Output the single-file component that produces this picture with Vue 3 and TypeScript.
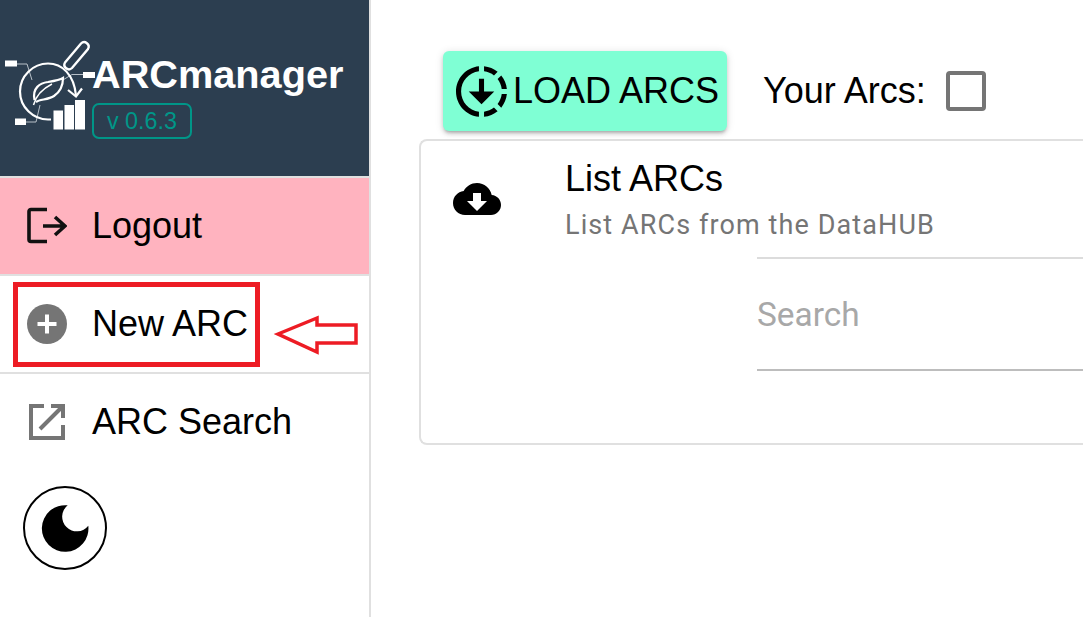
<script setup lang="ts">
const version = 'v 0.6.3'
</script>

<template>
  <div class="layout">
    <aside class="drawer">
      <header class="brand">
        <svg class="logo" viewBox="0 36 96 96" fill="none" stroke="#fff">
          <rect x="5" y="60.500" width="12" height="6" fill="#fff" stroke="none" />
          <path d="M17 64h10l5 16" stroke="#b8c0c8" stroke-width="1" />
          <rect x="15" y="118.500" width="11" height="6.500" fill="#fff" stroke="none" />
          <path d="M26 122h10l4-17" stroke="#b8c0c8" stroke-width="1" />
          <rect x="83" y="72" width="12" height="6" fill="#fff" stroke="none" />
          <path d="M83 74.500H72l-10 6" stroke="#b8c0c8" stroke-width="1" />
          <path d="M51 119.500H48c-15 0-28-12.500-28-28S33 63.500 48 63.500c14 0 26 11 28 32" stroke-width="2.200" />
          <path d="M68 90l8 6.500 6-8" stroke-width="2.200" />
          <path d="M34.500 100C32 88 40 83 48 82c6-1 12-2 15-4 0 8-3 14-9 18-6 4-14 3-18 6" stroke-width="2.200" />
          <path d="M33.500 105C36 95 44 88 52 84" stroke-width="1.500" />
          <path d="M65 62.500l16-19a4.500 4.500 0 0 1 7 5.500l-16 19a4.500 4.500 0 0 1-7-5.500z" stroke-width="2.400" />
          <rect x="53.500" y="110.500" width="9.500" height="19" fill="#fff" stroke="none" />
          <rect x="64.500" y="105" width="9.500" height="24.500" fill="#fff" stroke="none" />
          <rect x="75" y="100" width="10" height="29.500" fill="#fff" stroke="none" />
        </svg>
        <div class="brand-text">
          <div class="brand-title">ARCmanager</div>
          <span class="version">{{ version }}</span>
        </div>
      </header>

      <div class="nav-item logout">
        <svg class="nav-icon" viewBox="0 0 40 40" fill="none" stroke="#111" stroke-width="3.600">
          <path d="M20 3.500H4a2 2 0 0 0-2 2v28a2 2 0 0 0 2 2h16" />
          <path d="M16 20h22M28 11l10 9-10 9" />
        </svg>
        <span>Logout</span>
      </div>

      <div class="nav-item new-arc">
        <svg class="nav-icon" viewBox="0 0 40 40">
          <circle cx="20" cy="20" r="20" fill="#757575" />
          <path d="M20 10.500v19M10.500 20h19" stroke="#fff" stroke-width="4" />
        </svg>
        <span>New ARC</span>
        <div class="highlight"></div>
        <svg class="hint-arrow" viewBox="0 0 84 40" fill="#fff" stroke="#ed1c24" stroke-width="3.500">
          <path d="M3 19L42 3v7h39v18H42v9z" />
        </svg>
      </div>

      <div class="nav-item last">
        <svg class="nav-icon" viewBox="0 0 40 40" fill="none" stroke="#757575" stroke-width="4">
          <path d="M17 4H4v32h32V23" />
          <path d="M13 27L35 5M24 4h12v12" />
        </svg>
        <span>ARC Search</span>
      </div>

      <button class="theme-toggle" type="button" aria-label="Toggle theme">
        <svg viewBox="0 0 48 48" width="48" height="48">
          <path d="M26.700 1.300A23.300 23.300 0 1 0 47.300 21.700 14.600 14.600 0 1 1 26.700 1.300z" fill="#000" />
        </svg>
      </button>
    </aside>

    <main class="content">
      <div class="toolbar">
        <button class="load-btn" type="button">
          <svg class="load-icon" viewBox="2 2 20 20" fill="#000">
            <path d="M18.320 4.260C16.840 3.050 15.010 2.250 13 2.050v2.020c1.460.18 2.790.76 3.900 1.620L18.320 4.260zM19.930 11h2.020c-.2-2.010-1-3.840-2.210-5.320L18.310 7.100C19.170 8.210 19.750 9.540 19.930 11zM18.310 16.900l1.430 1.430c1.210-1.480 2.010-3.320 2.210-5.320h-2.020C19.750 14.460 19.170 15.790 18.310 16.900zM13 19.930v2.020c2.010-.2 3.840-1 5.320-2.210l-1.430-1.430C15.790 19.170 14.460 19.750 13 19.930zM11 19.930v2.020c-5.050-.5-9-4.760-9-9.950s3.950-9.450 9-9.950v2.020C7.050 4.560 4 7.920 4 12S7.050 19.440 11 19.930z" />
            <path d="M11 7h2v5h4l-5 5-5-5h4z" />
          </svg>
          LOAD ARCS
        </button>
        <span class="your-arcs">Your Arcs:</span>
        <span class="checkbox"></span>
      </div>

      <section class="card">
        <div class="card-head">
          <svg class="cloud" viewBox="0 4 24 16">
            <path d="M19.350 10.040C18.670 6.590 15.640 4 12 4 9.110 4 6.600 5.640 5.350 8.040 2.340 8.360 0 10.910 0 14c0 3.310 2.690 6 6 6h13c2.760 0 5-2.240 5-5 0-2.640-2.050-4.780-4.650-4.960zM17 13l-5 5-5-5h3V9h4v4h3z" fill="#000" />
          </svg>
          <div class="card-titles">
            <div class="card-title">List ARCs</div>
            <div class="card-sub">List ARCs from the DataHUB</div>
          </div>
        </div>
        <div class="search-row">
          <div class="search-field">Search</div>
        </div>
      </section>
    </main>
  </div>
</template>

<style>
html,
body {
  margin: 0;
  background: #fff;
  overflow: hidden;
}
</style>

<style scoped>
.layout {
  display: flex;
  width: 1083px;
  height: 617px;
  font-family: "Liberation Sans", Arial, sans-serif;
  color: #000;
}

.drawer {
  width: 369px;
  flex: none;
  border-right: 2px solid #e0e0e0;
  display: flex;
  flex-direction: column;
}

.brand {
  height: 140px;
  background: #2c3e50;
  border-bottom: 2px solid #e0e0e0;
  display: flex;
  align-items: flex-start;
  padding-top: 36px;
}

.logo {
  width: 96px;
  height: 96px;
  flex: none;
}

.brand-text {
  margin-left: -4px;
  padding-top: 16px;
}

.brand-title {
  color: #fff;
  font-size: 39.700px;
  font-weight: 700;
  line-height: 44px;
}

.version {
  display: inline-block;
  border: 2px solid #009688;
  border-radius: 7px;
  color: #009688;
  font-size: 23.300px;
  line-height: 32px;
  padding: 0 13px;
  margin-top: 7px;
}

.nav-item {
  height: 96px;
  border-bottom: 2px solid #e0e0e0;
  display: flex;
  align-items: center;
  padding-left: 27px;
  gap: 25px;
  font-size: 36px;
  position: relative;
}

.nav-item.last {
  border-bottom: 0;
}

.logout {
  background: #ffb3bf;
}

.new-arc {
  background: #fff;
}

.nav-icon {
  width: 40px;
  height: 40px;
  flex: none;
}

.highlight {
  position: absolute;
  left: 13px;
  top: 6px;
  width: 247px;
  height: 85px;
  box-sizing: border-box;
  border: 5px solid #ed1c24;
}

.hint-arrow {
  position: absolute;
  left: 275px;
  top: 39px;
  width: 84px;
  height: 40px;
  overflow: visible;
}

.theme-toggle {
  width: 84px;
  height: 84px;
  margin: 16px 0 0 23px;
  padding: 0;
  border: 2px solid #000;
  border-radius: 50%;
  background: #fff;
  display: flex;
  align-items: center;
  justify-content: center;
}

.content {
  flex: 1;
  min-width: 0;
  padding: 51px 0 0 48px;
}

.toolbar {
  display: flex;
  align-items: center;
  padding-left: 24px;
  height: 80px;
}

.load-btn {
  width: 284px;
  height: 80px;
  flex: none;
  display: flex;
  align-items: center;
  gap: 6px;
  padding: 0 0 0 13px;
  border: 0;
  border-radius: 6px;
  background: #7fffd4;
  font-family: inherit;
  font-size: 36px;
  color: #000;
  box-shadow: 0 3px 3px -2px rgba(0, 0, 0, 0.2), 0 3px 4px rgba(0, 0, 0, 0.14), 0 1px 8px rgba(0, 0, 0, 0.12);
}

.load-icon {
  width: 51px;
  height: 51px;
  flex: none;
}

.your-arcs {
  font-size: 36px;
  margin-left: 36px;
}

.checkbox {
  width: 32px;
  height: 32px;
  border: 4px solid #757575;
  border-radius: 4px;
  margin-left: 20px;
  flex: none;
}

.card {
  margin-top: 8px;
  height: 306px;
  box-sizing: border-box;
  border: 2px solid #e0e0e0;
  border-right: 0;
  border-radius: 8px 0 0 8px;
}

.card-head {
  display: flex;
  align-items: flex-start;
  padding: 17px 0 0 32px;
}

.cloud {
  width: 48px;
  height: 32px;
  flex: none;
  margin-top: 25px;
}

.card-titles {
  margin-left: 64px;
}

.card-title {
  font-size: 36px;
  line-height: 42px;
}

.card-sub {
  font-size: 27px;
  line-height: 32px;
  margin-top: 9px;
  letter-spacing: 1.100px;
  color: #757575;
  font-family: Roboto, "Liberation Sans", sans-serif;
}

.search-row {
  padding: 16px 0 0 336px;
}

.search-field {
  border-top: 2px solid #dcdcdc;
  border-bottom: 2px solid #bdbdbd;
  height: 109px;
  padding-top: 1px;
  display: flex;
  align-items: center;
  font-size: 33.400px;
  color: #a8a8a8;
  font-family: Roboto, "Liberation Sans", sans-serif;
}
</style>
